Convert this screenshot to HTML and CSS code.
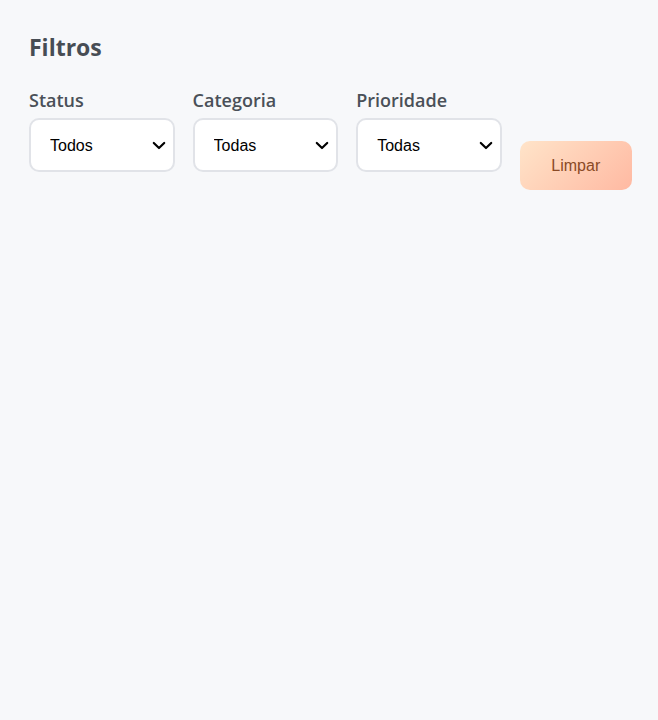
FILE: index.html
```html
<!DOCTYPE html>
<html lang="pt">
<head>
<meta charset="utf-8">
<title>Filtros</title>
<link rel="stylesheet" href="styles.css">
</head>
<body>
<section class="filters">
  <h2 class="filters-title">Filtros</h2>
  <div class="filters-row">
    <div class="field">
      <label class="field-label" for="status">Status</label>
      <select id="status" class="field-select">
        <option>Todos</option>
      </select>
    </div>
    <div class="field">
      <label class="field-label" for="categoria">Categoria</label>
      <select id="categoria" class="field-select">
        <option>Todas</option>
      </select>
    </div>
    <div class="field">
      <label class="field-label" for="prioridade">Prioridade</label>
      <select id="prioridade" class="field-select">
        <option>Todas</option>
      </select>
    </div>
    <button class="clear-btn" type="button">Limpar</button>
  </div>
</section>
</body>
</html>
```

FILE: styles.css
```css
html, body {
  margin: 0;
  padding: 0;
  background: #f7f8fa;
  height: 100%;
}

.filters {
  padding: 30px 26px 30px 29px;
  font-family: "Open Sans", "Noto Sans", sans-serif;
}

.filters-title {
  margin: 0 0 24px 0;
  font-size: 23px;
  font-weight: 700;
  line-height: 34px;
  color: #474d54;
}

.filters-row {
  display: flex;
  align-items: flex-end;
  gap: 18px;
}

.field {
  display: flex;
  flex-direction: column;
  flex-shrink: 0;
  gap: 6px;
  margin-bottom: 18px;
}

.field-label {
  font-size: 18px;
  font-weight: 600;
  line-height: 24px;
  color: #4a5058;
}

.field-select {
  -webkit-appearance: none;
  appearance: none;
  width: 145.6px;
  height: 54px;
  box-sizing: border-box;
  border: 2px solid #e1e3e8;
  border-radius: 10px;
  background-color: #ffffff;
  background-image: url("data:image/svg+xml;utf8,<svg xmlns='http://www.w3.org/2000/svg' width='14' height='9' viewBox='0 0 14 9'><path d='M1.8 2 L7 7 L12.2 2' fill='none' stroke='black' stroke-width='2.2' stroke-linecap='round' stroke-linejoin='round'/></svg>");
  background-repeat: no-repeat;
  background-position: right 7px center;
  background-size: 14px 9px;
  padding: 0 28px 0 19px;
  font-family: "Liberation Sans", Arial, sans-serif;
  font-size: 16px;
  color: #000000;
}

.clear-btn {
  flex-shrink: 0;
  width: 112px;
  height: 49px;
  border: none;
  border-radius: 10px;
  background: linear-gradient(135deg, #ffe4c9 0%, #ffb9a2 100%);
  font-family: "Liberation Sans", Arial, sans-serif;
  font-size: 16px;
  color: #8a4a26;
  cursor: pointer;
}
```
